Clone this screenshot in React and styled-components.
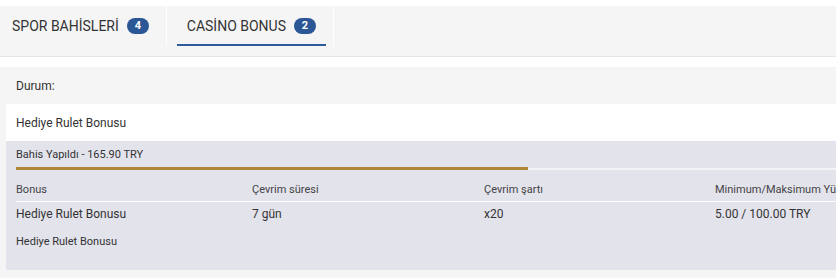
import styled, { createGlobalStyle } from 'styled-components';

const GlobalStyle = createGlobalStyle`
  body {
    margin: 0;
    background: #fff;
    font-family: Roboto, "Liberation Sans", Arial, sans-serif;
    color: #333;
    overflow: hidden;
  }
`;

const tabs = [
  { name: 'SPOR BAHİSLERİ', count: 4 },
  { name: 'CASİNO BONUS', count: 2, active: true },
];

const columns = [
  { title: 'Bonus', value: 'Hediye Rulet Bonusu' },
  { title: 'Çevrim süresi', value: '7 gün' },
  { title: 'Çevrim şartı', value: 'x20' },
  { title: 'Minimum/Maksimum Yükleme', value: '5.00 / 100.00 TRY' },
];

function App() {
  const progress = 512;

  return (
    <Page>
      <GlobalStyle />
      <TabBar>
        {tabs.map((tab, i) => (
          <Tab key={tab.name} $first={i === 0}>
            <TabLink $active={tab.active}>
              {tab.name}
              <Badge>{tab.count}</Badge>
            </TabLink>
          </Tab>
        ))}
      </TabBar>
      <Panel>
        <StatusLabel>Durum:</StatusLabel>
        <BonusTitle>Hediye Rulet Bonusu</BonusTitle>
        <Details>
          <BetInfo>Bahis Yapıldı - 165.90 TRY</BetInfo>
          <Track>
            <Fill style={{ width: progress }} />
          </Track>
          <Table>
            {columns.map((col) => (
              <HeadCell key={col.title}>{col.title}</HeadCell>
            ))}
            {columns.map((col) => (
              <Cell key={col.title}>{col.value}</Cell>
            ))}
          </Table>
          <Note>Hediye Rulet Bonusu</Note>
        </Details>
      </Panel>
    </Page>
  );
}

export default App;

const Page = styled.div`
  width: 960px;
  padding-top: 6px;
`;

const TabBar = styled.div`
  display: flex;
  height: 50px;
  background: #f5f5f5;
  border-bottom: 1px solid #e6e6e6;
`;

const Tab = styled.div`
  display: flex;
  height: 40px;
  padding: 0 7px 0 ${(p) => (p.$first ? '2px' : '10px')};
  border-right: 1px solid #fff;
`;

const TabLink = styled.div`
  display: flex;
  align-items: center;
  gap: 8px;
  padding: 0 10px;
  height: 37px;
  margin-top: 1px;
  font-size: 14px;
  color: #333;
  border-bottom: 2px solid ${(p) => (p.$active ? '#2f5b9b' : 'transparent')};
`;

const Badge = styled.span`
  display: inline-flex;
  align-items: center;
  justify-content: center;
  min-width: 22px;
  height: 16px;
  border-radius: 8px;
  background: #2b5797;
  color: #fff;
  font-size: 11px;
  font-weight: 700;
`;

const Panel = styled.div`
  margin-top: 10px;
  background: #f5f5f5;
  padding: 0 6px 8px;
`;

const StatusLabel = styled.div`
  display: flex;
  align-items: center;
  height: 37px;
  padding: 0 10px;
  font-size: 12px;
`;

const BonusTitle = styled.div`
  display: flex;
  align-items: center;
  height: 37px;
  padding: 0 10px;
  background: #fff;
  font-size: 12px;
`;

const Details = styled.div`
  background: #e3e3ec;
  padding: 0 10px;
  height: 129px;
`;

const BetInfo = styled.div`
  display: flex;
  align-items: center;
  height: 26px;
  font-size: 11px;
`;

const Track = styled.div`
  height: 3px;
  background: linear-gradient(to bottom, transparent 1px, #f3f3f7 1px);
`;

const Fill = styled.div`
  height: 3px;
  background: #b3873b;
`;

const Table = styled.div`
  display: grid;
  grid-template-columns: 236px 232px 231px 240px;
`;

const HeadCell = styled.div`
  height: 24px;
  padding-top: 7px;
  box-sizing: content-box;
  display: flex;
  align-items: center;
  font-size: 11px;
  color: #444;
  border-bottom: 1px solid #fff;
  white-space: nowrap;
`;

const Cell = styled.div`
  display: flex;
  align-items: center;
  height: 23px;
  font-size: 12px;
  white-space: nowrap;
`;

const Note = styled.div`
  display: flex;
  align-items: center;
  height: 33px;
  font-size: 11px;
`;
